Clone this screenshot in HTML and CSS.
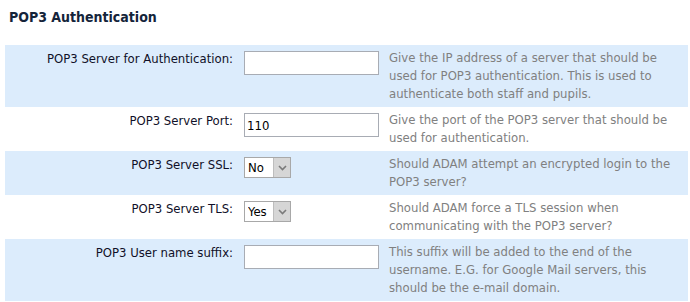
FILE: index.html
```html
<!DOCTYPE html>
<html>
<head>
<meta charset="utf-8">
<link rel="stylesheet" href="styles.css">
</head>
<body>
<div class="page">
  <h2 class="title">POP3 Authentication</h2>
  <div class="form">
    <div class="row alt">
      <div class="label">POP3 Server for Authentication:</div>
      <div class="field"><input class="text" type="text" value=""></div>
      <div class="desc">Give the IP address of a server that should be used for POP3 authentication. This is used to authenticate both staff and pupils.</div>
    </div>
    <div class="row">
      <div class="label">POP3 Server Port:</div>
      <div class="field"><input class="text" type="text" value="110"></div>
      <div class="desc">Give the port of the POP3 server that should be used for authentication.</div>
    </div>
    <div class="row alt">
      <div class="label">POP3 Server SSL:</div>
      <div class="field">
        <span class="select">
          <select><option>No</option><option>Yes</option></select>
          <span class="arrow"><svg width="9" height="6" viewBox="0 0 9 6"><path d="M1 1 L4.5 4.5 L8 1" fill="none" stroke="#7a7a7a" stroke-width="1.6"/></svg></span>
        </span>
      </div>
      <div class="desc">Should ADAM attempt an encrypted login to the POP3 server?</div>
    </div>
    <div class="row">
      <div class="label">POP3 Server TLS:</div>
      <div class="field">
        <span class="select">
          <select><option>Yes</option><option>No</option></select>
          <span class="arrow"><svg width="9" height="6" viewBox="0 0 9 6"><path d="M1 1 L4.5 4.5 L8 1" fill="none" stroke="#7a7a7a" stroke-width="1.6"/></svg></span>
        </span>
      </div>
      <div class="desc">Should ADAM force a TLS session when communicating with the POP3 server?</div>
    </div>
    <div class="row alt">
      <div class="label">POP3 User name suffix:</div>
      <div class="field"><input class="text" type="text" value=""></div>
      <div class="desc">This suffix will be added to the end of the username. E.G. for Google Mail servers, this should be the e-mail domain.</div>
    </div>
  </div>
</div>
</body>
</html>
```

FILE: styles.css
```css
html, body {
  margin: 0;
  padding: 0;
  background: #ffffff;
}
body {
  font-family: "DejaVu Sans", sans-serif;
  font-size: 11.7px;
  line-height: 18px;
}
.page {
  padding: 8px 2px 0 5px;
}
.title {
  margin: 0 0 19px 4px;
  font-family: "DejaVu Sans Condensed", "DejaVu Sans", sans-serif;
  font-size: 14px;
  line-height: 18px;
  font-weight: bold;
  color: #14243a;
}
.form {
  width: 683px;
}
.row {
  display: grid;
  grid-template-columns: 233px 145px 1fr;
  padding: 4px 0;
}
.row.alt {
  background: #dcecfc;
}
.label {
  text-align: right;
  padding-right: 5px;
  padding-top: 1px;
  color: #101028;
}
.field {
  padding-left: 6px;
  padding-top: 2px;
}
.desc {
  padding-left: 6px;
  padding-right: 4px;
  color: #808080;
}
.text {
  box-sizing: border-box;
  width: 135px;
  height: 24px;
  margin: 0;
  padding: 0 2px;
  border: 1px solid #a8acb4;
  background: #fff;
  font-family: "DejaVu Sans Condensed", "DejaVu Sans", sans-serif;
  font-size: 13px;
  color: #000;
  outline: none;
  display: block;
}
.select {
  position: relative;
  display: block;
  width: 47px;
  height: 21px;
}
.select select {
  -webkit-appearance: none;
  appearance: none;
  box-sizing: border-box;
  width: 47px;
  height: 21px;
  margin: 0;
  padding: 0 0 0 3px;
  border: 1px solid #a8a8a8;
  border-radius: 0;
  background: #fff;
  font-family: "DejaVu Sans Condensed", "DejaVu Sans", sans-serif;
  font-size: 13px;
  color: #000;
  display: block;
}
.arrow {
  position: absolute;
  top: 1px;
  right: 1px;
  width: 16px;
  height: 19px;
  background: #d6d6d6;
  border-left: 1px solid #bdbdbd;
  display: flex;
  align-items: center;
  justify-content: center;
  pointer-events: none;
}
.arrow svg {
  display: block;
}
```
